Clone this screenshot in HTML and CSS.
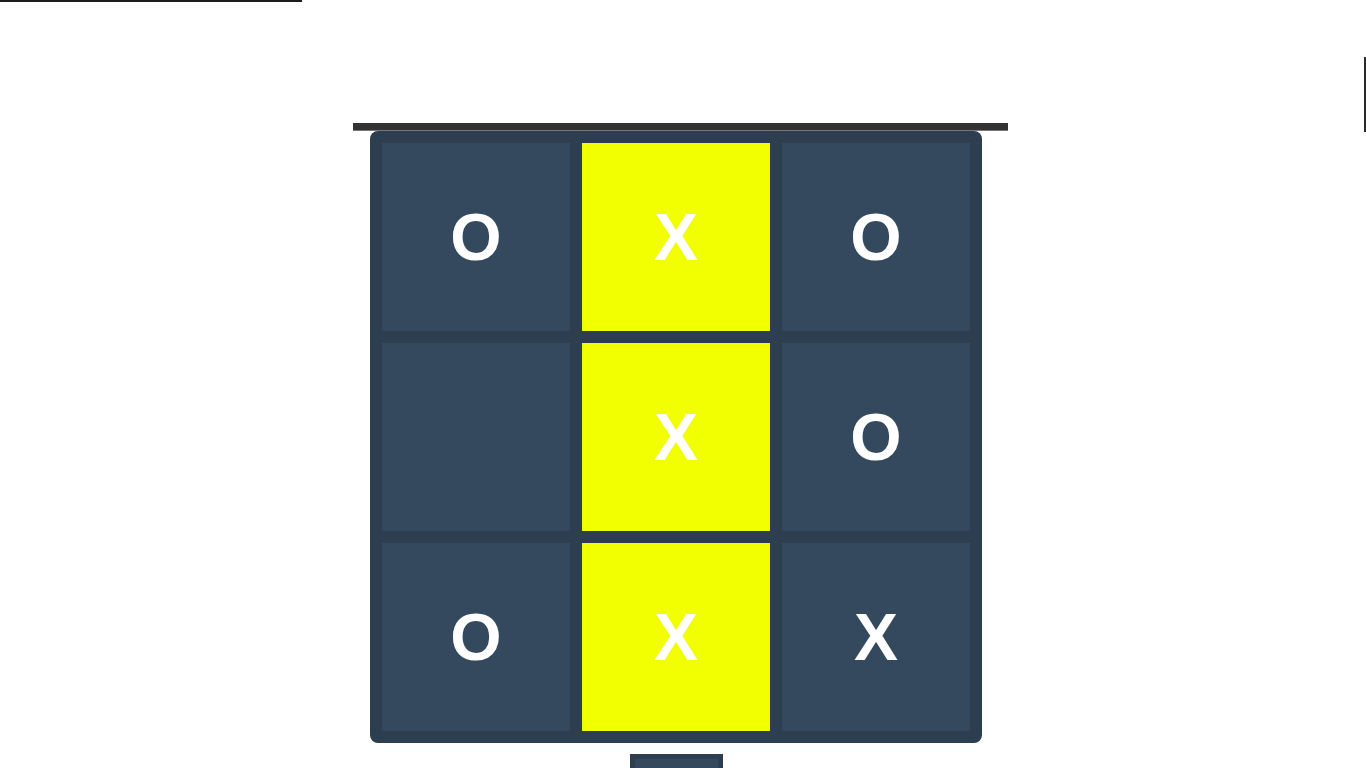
FILE: index.html
```html
<!DOCTYPE html>
<html>
<head>
<meta charset="utf-8">
<link rel="stylesheet" href="styles.css">
</head>
<body>
<div class="topline"></div>
<div class="edge"></div>
<main class="game">
  <div class="bar"></div>
  <div class="board">
    <div class="cell">O</div>
    <div class="cell win">X</div>
    <div class="cell">O</div>
    <div class="cell"></div>
    <div class="cell win">X</div>
    <div class="cell">O</div>
    <div class="cell">O</div>
    <div class="cell win">X</div>
    <div class="cell">X</div>
  </div>
  <button class="reset"></button>
</main>
</body>
</html>
```
FILE: styles.css
```css
html, body {
  margin: 0;
  padding: 0;
  background: #fff;
  overflow: hidden;
  height: 768px;
}
body {
  font-family: "Liberation Sans", Arial, sans-serif;
  position: relative;
}
.topline {
  width: 302px;
  height: 2px;
  background: #1c1c1c;
}
.edge {
  position: absolute;
  left: 1364px;
  top: 57px;
  width: 2px;
  height: 75px;
  background: #2a2a2a;
}
.game {
  width: 1352px;
  display: flex;
  flex-direction: column;
  align-items: center;
  padding-top: 121px;
}
.bar {
  width: 655px;
  height: 7px;
  background: #333;
  border-bottom: 1px solid #777;
  margin-left: 9px;
}
.board {
  display: grid;
  grid-template-columns: repeat(3, 188px);
  grid-template-rows: repeat(3, 188px);
  gap: 12px;
  padding: 12px;
  background: #2c3e50;
  border-radius: 8px;
}
.cell {
  background: #34495e;
  color: #fff;
  font-weight: bold;
  font-size: 66px;
  display: flex;
  align-items: center;
  justify-content: center;
  line-height: 1;
}
.cell.win {
  background: #f2ff00;
}
.reset {
  margin-top: 11px;
  width: 93px;
  height: 40px;
  background: #34495e;
  border: 5px solid #2c3e50;
  padding: 0;
}
```
